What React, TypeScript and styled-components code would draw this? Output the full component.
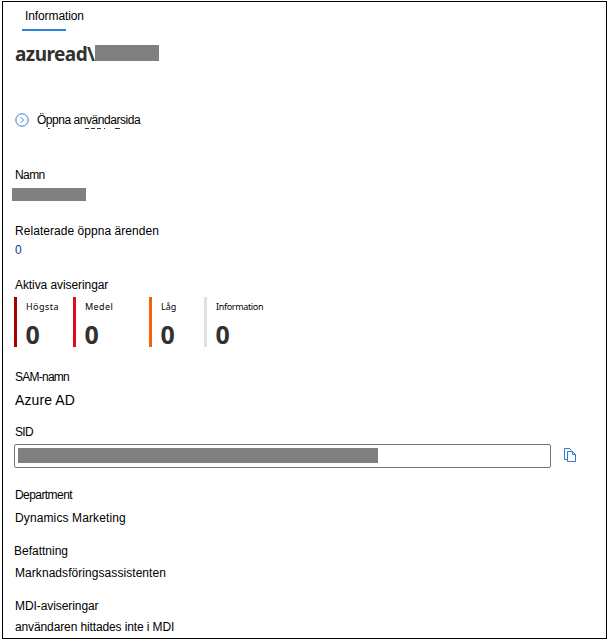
import React from "react";
import styled, { createGlobalStyle } from "styled-components";

const GlobalStyle = createGlobalStyle`
  * { box-sizing: border-box; }
  body { margin: 0; background: #fff; }
`;

const Panel = styled.main`
  width: 605px;
  height: 638px;
  margin: 1px 0 0 2px;
  padding: 6px 0 0 11px;
  border: 1px solid #000;
  background: #fff;
  color: #000;
  font-family: "Liberation Sans", Arial, sans-serif;
  font-size: 12px;
  line-height: 16px;
  white-space: nowrap;
  overflow: hidden;
`;

const Tab = styled.div`
  width: 44px;
  height: 23px;
  margin-left: 8px;
  padding-left: 3px;
  border-bottom: 2px solid #2b88d8;
  letter-spacing: -0.1px;
`;

const Heading = styled.h1`
  display: flex;
  align-items: flex-start;
  height: 28px;
  margin: 9px 0 0;
  color: #323130;
  font: 700 19px/28px "Noto Sans", "Open Sans", sans-serif;
`;

const Redacted = styled.div<{ $w: number; $h: number }>`
  width: ${(p) => p.$w}px;
  height: ${(p) => p.$h}px;
  flex: none;
  background: #808080;
`;

const UserName = styled.span`
  width: 81px;
  padding-left: 1px;
  letter-spacing: -0.55px;
`;

const HeadingMask = styled(Redacted)`
  margin-top: 5px;
`;

const OpenLink = styled.a`
  display: flex;
  height: 16px;
  margin-top: 44px;
  padding-left: 1px;
  gap: 8px;
  letter-spacing: -0.46px;

  svg { flex: none; margin-top: 1px; }
`;

const ClippedLine = styled.svg`
  display: block;
  margin-left: 33px;
`;

const Details = styled.div`
  margin-top: 38px;
`;

const Field = styled.section<{ $h: number }>`
  height: ${(p) => p.$h}px;
`;

const Label = styled.div<{ $track?: number; $indent?: number }>`
  height: 16px;
  padding-left: ${(p) => p.$indent ?? 1}px;
  letter-spacing: ${(p) => p.$track ?? 0}px;
`;

const Value = styled.div<{ $gap: number; $track?: number; $size?: number; $color?: string }>`
  height: 16px;
  margin-top: ${(p) => p.$gap}px;
  padding-left: 1px;
  color: ${(p) => p.$color ?? "#000"};
  font-size: ${(p) => p.$size ?? 12}px;
  letter-spacing: ${(p) => p.$track ?? 0}px;
`;

const NameMask = styled(Redacted)`
  margin: 5px 0 0 -2px;
`;

const Alerts = styled.div`
  display: flex;
  height: 50px;
  margin-top: 4px;
`;

const Alert = styled.div<{ $color: string; $w: number }>`
  width: ${(p) => p.$w}px;
  padding-left: 9px;
  border-left: 3px solid ${(p) => p.$color};
`;

const Severity = styled.div<{ $track?: number }>`
  height: 20px;
  font: 9px/20px "Noto Sans", "Open Sans", sans-serif;
  letter-spacing: ${(p) => p.$track ?? 0}px;
`;

const Count = styled.div`
  height: 30px;
  margin-left: -0.5px;
  color: #323130;
  font: 700 25px/34px "Noto Sans", "Open Sans", sans-serif;
`;

const SidRow = styled.div`
  display: flex;
  align-items: flex-start;
  gap: 13px;
  margin-top: 4px;

  > svg { margin-top: 4px; }
`;

const SidBox = styled.div`
  display: flex;
  align-items: flex-start;
  width: 537px;
  height: 24px;
  padding: 3px;
  border: 1px solid #767676;
  border-radius: 2px;
`;

const ALERTS = [
  { name: "Högsta", color: "#a80000", width: 59, track: 0.45 },
  { name: "Medel", color: "#e00b1c", width: 76, track: 0.4 },
  { name: "Låg", color: "#f7630c", width: 55, track: 0 },
  { name: "Information", color: "#e1e1e1", width: 80, track: -0.34 },
];

export default function App() {
  return (
    <>
      <GlobalStyle />
      <Panel>
        <Tab>Information</Tab>
        <Heading>
          <UserName>azuread\</UserName>
          <HeadingMask $w={64} $h={16} />
        </Heading>
        <OpenLink>
          <svg width="14" height="14" viewBox="0 0 14 14" fill="none" stroke="#2b7cd3">
            <circle cx="7" cy="7" r="6.2" />
            <path d="M5.5 4 8.5 7 5.5 10" />
          </svg>
          Öppna användarsida
        </OpenLink>
        <ClippedLine width="80" height="1" viewBox="0 0 80 1" stroke="#333">
          <path d="M1 .5h2M38 .5h4M44 .5h4M50 .5h4M57 .5h1M68 .5h5" />
        </ClippedLine>

        <Details>
          <Field $h={56}>
            <Label $track={-0.6}>Namn</Label>
            <NameMask $w={74} $h={13} />
          </Field>
          <Field $h={54}>
            <Label $track={0.05}>Relaterade öppna ärenden</Label>
            <Value $gap={3} $color="#0b3a7a">0</Value>
          </Field>
          <Field $h={92}>
            <Label $track={-0.08}>Aktiva aviseringar</Label>
            <Alerts>
              {ALERTS.map((a) => (
                <Alert key={a.name} $color={a.color} $w={a.width}>
                  <Severity $track={a.track}>{a.name}</Severity>
                  <Count>0</Count>
                </Alert>
              ))}
            </Alerts>
          </Field>
          <Field $h={55}>
            <Label $track={-0.75}>SAM-namn</Label>
            <Value $gap={7} $size={14} $track={0.1}>Azure AD</Value>
          </Field>
          <Field $h={63}>
            <Label $track={-0.7}>SID</Label>
            <SidRow>
              <SidBox>
                <Redacted $w={360} $h={15} />
              </SidBox>
              <svg width="13" height="15" viewBox="0 0 13 15" fill="none" stroke="#2b7cd3">
                <path d="M3 11.5H.5V.5H5.500L7.500 2.500" />
                <path d="M3.500 3.500H8.500L11.500 6.500V13.500H3.500ZM8.500 3.500V6.500H11.500" />
              </svg>
            </SidRow>
          </Field>
          <Field $h={56}>
            <Label $track={-0.57}>Department</Label>
            <Value $gap={7} $track={0.12}>Dynamics Marketing</Value>
          </Field>
          <Field $h={55}>
            <Label $indent={0}>Befattning</Label>
            <Value $gap={6} $track={0.06}>Marknadsföringsassistenten</Value>
          </Field>
          <Field $h={40}>
            <Label $track={-0.08}>MDI-aviseringar</Label>
            <Value $gap={5} $track={-0.12}>användaren hittades inte i MDI</Value>
          </Field>
        </Details>
      </Panel>
    </>
  );
}
